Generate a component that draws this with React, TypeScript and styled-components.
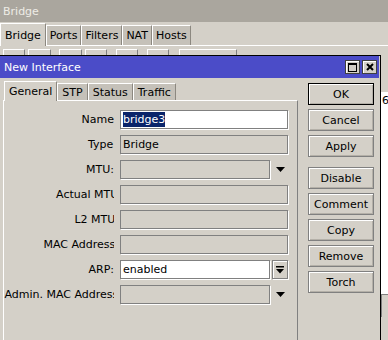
import React from 'react';
import styled, { createGlobalStyle } from 'styled-components';

const GlobalStyle = createGlobalStyle`
  html, body { margin: 0; padding: 0; background: #d4d0c8; }
  body {
    font-family: "DejaVu Sans", Verdana, sans-serif;
    font-size: 11px;
    color: #000;
  }
`;

const Screen = styled.div`
  position: relative;
  width: 388px;
  height: 340px;
  overflow: hidden;
  background: #d4d0c8;
`;

/* ---------- background "Bridge" window ---------- */

const BgTitle = styled.div`
  height: 22px;
  background: #aaa69e;
  color: #eeece6;
  padding-left: 3px;
  display: flex;
  align-items: center;
`;

const BgTabStrip = styled.div`
  height: 23px;
  display: flex;
  align-items: flex-end;
`;

const BgTab = styled.div<{ $active?: boolean }>`
  height: ${p => (p.$active ? 23 : 20)}px;
  margin-bottom: ${p => (p.$active ? -1 : 0)}px;
  position: relative;
  z-index: ${p => (p.$active ? 1 : 0)};
  box-sizing: border-box;
  padding: 0 ${p => (p.$active ? 4 : 3)}px;
  display: flex;
  align-items: center;
  background: ${p => (p.$active ? '#d4d0c8' : '#c5c1b9')};
  border-top: 1px solid #fff;
  border-left: 1px solid #fff;
  border-right: 1px solid #8c8880;
`;

const BgToolbar = styled.div`
  border-top: 1px solid #fff;
  display: flex;
  padding: 3px 0 0 3px;
  height: 26px;
`;

const ToolBox = styled.div<{ $w: number; $gap: number }>`
  width: ${p => p.$w}px;
  height: 22px;
  margin-left: ${p => p.$gap}px;
  box-sizing: border-box;
  border-top: 1px solid #fff;
  border-left: 1px solid #fff;
  border-right: 1px solid #808080;
  border-bottom: 1px solid #808080;
`;

const BgList = styled.div`
  margin-left: 3px;
  height: 242px;
  display: flex;
  flex-direction: column;
  border-left: 1px solid #808080;
`;

const BgListHeader = styled.div`
  height: 17px;
  background: #d4d0c8;
`;

const BgListBody = styled.div`
  flex: 1;
  background: #fff;
`;

const BgRow = styled.div`
  height: 16px;
  display: flex;
  align-items: center;
  padding-left: 378px;
  white-space: nowrap;
  color: #000;
`;

const BgStatus = styled.div`
  height: 22px;
  border-top: 1px solid #808080;
  background: #d4d0c8;
  display: flex;
`;

const StatusCell = styled.div<{ $w: number }>`
  width: ${p => p.$w}px;
  border-right: 1px solid #808080;
`;

/* ---------- dialog ---------- */

const Dialog = styled.div`
  position: absolute;
  left: -2px;
  top: 55px;
  width: 383px;
  height: 300px;
  box-sizing: border-box;
  border: 1px solid #000;
  background: #d4d0c8;
`;

const TitleBar = styled.div`
  height: 22px;
  margin: 0 1px;
  background: #4b4cc8;
  color: #fff;
  display: flex;
  align-items: center;
  padding: 0 2px 0 4px;
`;

const TitleText = styled.div`
  flex: 1;
`;

const TitleButton = styled.div`
  width: 15px;
  height: 14px;
  box-sizing: border-box;
  margin-left: 2px;
  background: #d4d0c8;
  border: 1px solid #404040;
  box-shadow: inset 1px 1px #fff;
  display: flex;
  align-items: center;
  justify-content: center;
`;

const Body = styled.div`
  display: flex;
  padding: 3px 0 0 4px;
`;

const LeftColumn = styled.div`
  width: 295px;
  display: flex;
  flex-direction: column;
`;

const TabRow = styled.div`
  height: 19px;
  display: flex;
  align-items: flex-end;
  padding-left: 1px;
`;

const Tab = styled.div<{ $active?: boolean }>`
  height: ${p => (p.$active ? 20 : 17)}px;
  margin-bottom: ${p => (p.$active ? -1 : 0)}px;
  position: relative;
  z-index: ${p => (p.$active ? 1 : 0)};
  box-sizing: border-box;
  padding: 0 4px;
  display: flex;
  align-items: center;
  background: ${p => (p.$active ? '#d4d0c8' : '#c5c1b9')};
  border-top: 1px solid #fff;
  border-left: 1px solid #fff;
  border-right: 1px solid #8c8880;
`;

const Panel = styled.div`
  height: 240px;
  box-sizing: border-box;
  border-top: 1px solid #fff;
  border-left: 1px solid #fff;
  border-right: 1px solid #808080;
  padding-top: 9px;
  display: flex;
  flex-direction: column;
  gap: 6px;
`;

const FormRow = styled.div`
  display: grid;
  grid-template-columns: 110px 168px;
  column-gap: 6px;
  height: 19px;
  align-items: center;
`;

const Label = styled.div`
  text-align: right;
  white-space: nowrap;
  overflow: hidden;
`;

const LabelText = styled.span<{ $clip?: number }>`
  display: inline-block;
  margin-right: ${p => -(p.$clip ?? 0)}px;
`;

const FieldLine = styled.div`
  display: flex;
  align-items: center;
  gap: 2px;
  height: 19px;
`;

const Field = styled.div<{ $white?: boolean; $w: number }>`
  width: ${p => p.$w}px;
  height: 19px;
  box-sizing: border-box;
  border: 1px solid #808080;
  box-shadow: 1px 1px 0 #fff;
  background: ${p => (p.$white ? '#fff' : '#d4d0c8')};
  padding-left: 2px;
  display: flex;
  align-items: center;
  white-space: nowrap;
`;

const Selected = styled.span`
  background: #0a246a;
  color: #fff;
  padding: 1px 0;
`;

const ArrowSlot = styled.div`
  width: 16px;
  height: 19px;
  display: flex;
  align-items: center;
  justify-content: center;
`;

const ArrowButton = styled(ArrowSlot)`
  box-sizing: border-box;
  border: 1px solid #808080;
  box-shadow: 1px 1px 0 #fff, inset 1px 1px #fff;
  background: #d4d0c8;
`;

const ButtonColumn = styled.div`
  margin: 2px 0 0 10px;
  display: flex;
  flex-direction: column;
  gap: 10px;
`;

const ButtonGroup = styled.div`
  display: flex;
  flex-direction: column;
  gap: 4px;
`;

const Btn = styled.div<{ $default?: boolean }>`
  width: 66px;
  height: 22px;
  box-sizing: border-box;
  border: 1px solid ${p => (p.$default ? '#000' : '#808080')};
  box-shadow: inset 1px 1px #fff, inset -1px -1px #b4b0a8;
  background: #d4d0c8;
  display: flex;
  align-items: center;
  justify-content: center;
`;

const DownTriangle = () => (
  <svg width="9" height="5" viewBox="0 0 9 5">
    <polygon points="0,0 9,0 4.5,5" fill="#000" />
  </svg>
);

const DownBarTriangle = () => (
  <svg width="8" height="8" viewBox="0 0 8 8">
    <rect x="0" y="0" width="8" height="1.5" fill="#000" />
    <polygon points="0,3 8,3 4,7.5" fill="#000" />
  </svg>
);

const MaxIcon = () => (
  <svg width="9" height="9" viewBox="0 0 9 9">
    <rect x="0.5" y="0.5" width="8" height="8" fill="none" stroke="#000" />
    <rect x="0" y="0" width="9" height="2" fill="#000" />
  </svg>
);

const CloseIcon = () => (
  <svg width="8" height="8" viewBox="0 0 8 8">
    <path d="M1 1 L7 7 M7 1 L1 7" stroke="#000" strokeWidth="2" />
  </svg>
);

type Row = {
  label: string;
  clip?: number;
  value?: React.ReactNode;
  white?: boolean;
  kind?: 'plain' | 'arrow' | 'button';
};

const rows: Row[] = [
  { label: 'Name', value: <Selected>bridge3</Selected>, white: true },
  { label: 'Type:', clip: 3, value: 'Bridge' },
  { label: 'MTU:', kind: 'arrow' },
  { label: 'Actual MTU:', clip: 8 },
  { label: 'L2 MTU:', clip: 5 },
  { label: 'MAC Address:', clip: 5 },
  { label: 'ARP:', value: 'enabled', white: true, kind: 'button' },
  { label: 'Admin. MAC Address:', clip: 8, kind: 'arrow' },
];

const toolBoxes = [
  { w: 22, gap: 0 },
  { w: 23, gap: 3 },
  { w: 23, gap: 8 },
  { w: 22, gap: 3 },
  { w: 22, gap: 9 },
  { w: 22, gap: 9 },
  { w: 58, gap: 10 },
];

export default function App() {
  return (
    <Screen>
      <GlobalStyle />
      <BgTitle>Bridge</BgTitle>
      <BgTabStrip>
        <BgTab $active>Bridge</BgTab>
        <BgTab>Ports</BgTab>
        <BgTab>Filters</BgTab>
        <BgTab>NAT</BgTab>
        <BgTab>Hosts</BgTab>
      </BgTabStrip>
      <BgToolbar>
        {toolBoxes.map((b, i) => (
          <ToolBox key={i} $w={b.w} $gap={b.gap} />
        ))}
      </BgToolbar>
      <BgList>
        <BgListHeader />
        <BgListBody>
          <BgRow>6.4.2</BgRow>
        </BgListBody>
        <BgStatus>
          <StatusCell $w={377} />
        </BgStatus>
      </BgList>

      <Dialog>
        <TitleBar>
          <TitleText>New Interface</TitleText>
          <TitleButton><MaxIcon /></TitleButton>
          <TitleButton><CloseIcon /></TitleButton>
        </TitleBar>
        <Body>
          <LeftColumn>
            <TabRow>
              <Tab $active>General</Tab>
              <Tab>STP</Tab>
              <Tab>Status</Tab>
              <Tab>Traffic</Tab>
            </TabRow>
            <Panel>
              {rows.map(r => (
                <FormRow key={r.label}>
                  <Label>
                    <LabelText $clip={r.clip}>{r.label}</LabelText>
                  </Label>
                  <FieldLine>
                    <Field $white={r.white} $w={r.kind ? 150 : 168}>
                      {r.value}
                    </Field>
                    {r.kind === 'arrow' && <ArrowSlot><DownTriangle /></ArrowSlot>}
                    {r.kind === 'button' && <ArrowButton><DownBarTriangle /></ArrowButton>}
                  </FieldLine>
                </FormRow>
              ))}
            </Panel>
          </LeftColumn>
          <ButtonColumn>
            <ButtonGroup>
              <Btn $default>OK</Btn>
              <Btn>Cancel</Btn>
              <Btn>Apply</Btn>
            </ButtonGroup>
            <ButtonGroup>
              <Btn>Disable</Btn>
              <Btn>Comment</Btn>
              <Btn>Copy</Btn>
              <Btn>Remove</Btn>
              <Btn>Torch</Btn>
            </ButtonGroup>
          </ButtonColumn>
        </Body>
      </Dialog>
    </Screen>
  );
}
